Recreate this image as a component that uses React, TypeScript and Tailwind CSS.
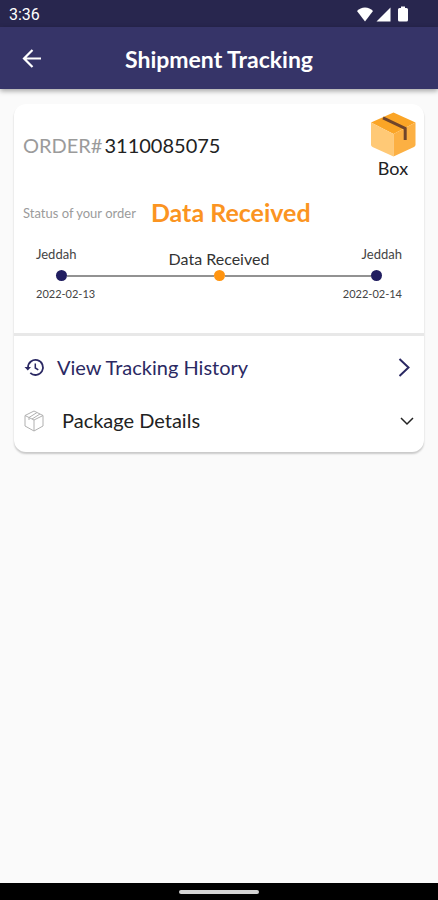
import React from "react";

const ROW = "flex h-[53px] w-full items-center text-left text-xl";

function StatusBar() {
  return (
    <div className="flex h-[27px] items-center justify-between bg-[#28264e] pr-[29px] pl-[9px] text-white">
      <span className="pt-0.5 font-[Roboto,sans-serif] text-base">3:36</span>
      <div className="flex items-center gap-0.5">
        <svg className="h-4 w-[18px]" viewBox="0 0 18 16" fill="currentColor" aria-hidden="true">
          <path d="M9 15.500 1 5C3.200 2.800 5.800 1.500 9 1.500S14.800 2.800 17 5z" />
        </svg>
        <svg className="h-4 w-[15px]" viewBox="0 0 15 16" fill="currentColor" aria-hidden="true">
          <path d="M14.500 1.500v14H0.500z" />
        </svg>
        <svg className="ml-1 h-4 w-3" viewBox="0 0 12 16" fill="currentColor" aria-hidden="true">
          <path d="M4 0.500h4V2h1.500a1.500 1.500 0 0 1 1.500 1.500v10.500a1.500 1.500 0 0 1-1.500 1.500h-7A1.500 1.500 0 0 1 1 14V3.500A1.500 1.500 0 0 1 2.500 2H4z" />
        </svg>
      </div>
    </div>
  );
}

function AppBar() {
  return (
    <header className="grid h-[62px] grid-cols-[64px_1fr_64px] items-center bg-[#363468] text-white shadow-[0_2px_5px_rgba(0,0,0,0.35)]">
      <button type="button" aria-label="Back" className="flex h-14 w-16 items-center justify-center">
        <svg className="size-5" viewBox="0 0 20 20" fill="none" stroke="currentColor" strokeWidth="2.200" aria-hidden="true">
          <path d="M19 10.500H2M10.500 2 2 10.500l8.500 8.500" />
        </svg>
      </button>
      <h1 className="pt-0.5 text-center text-[23px] leading-7 font-bold whitespace-nowrap">Shipment Tracking</h1>
    </header>
  );
}

function BoxPicture() {
  return (
    <svg className="h-[45px] w-[46px]" viewBox="0 0 46 45" aria-hidden="true">
      <path d="M23.500 0.500 45.500 10.500 23.500 22 1 10.500z" fill="#fba526" />
      <path d="M1 10.500 23.500 22v22.500L2.500 35Q1 34.300 1 32.800z" fill="#ffc976" />
      <path d="M45.500 10.500 23.500 22v22.500L44 35q1.500-.7 1.500-2.200z" fill="#fcb043" />
      <path d="M13 5.800 35.200 16.500V28" fill="none" stroke="#70452b" strokeWidth="3" />
    </svg>
  );
}

function Timeline() {
  return (
    <div className="mt-[17px] px-[22px] text-[#444]">
      <div className="flex h-[23px] justify-between">
        <span className="w-20 text-[13px] leading-4">Jeddah</span>
        <span className="self-end text-base leading-5 text-[#333]">Data Received</span>
        <span className="w-20 text-right text-[13px] leading-4">Jeddah</span>
      </div>
      <div className="mt-px flex items-center px-5">
        <span className="size-[11px] rounded-full bg-[#211e60]" />
        <span className="h-0.5 flex-1 bg-[#929292]" />
        <span className="size-[11px] rounded-full bg-[#ff9410]" />
        <span className="h-0.5 flex-1 bg-[#929292]" />
        <span className="size-[11px] rounded-full bg-[#211e60]" />
      </div>
      <div className="mt-[5px] flex justify-between text-[11px] leading-4">
        <time dateTime="2022-02-13">2022-02-13</time>
        <time dateTime="2022-02-14">2022-02-14</time>
      </div>
    </div>
  );
}

export default function App() {
  return (
    <div className="flex min-h-screen flex-col bg-[#fafafa] font-[Lato,sans-serif]">
      <StatusBar />
      <AppBar />
      <main className="flex-1 px-3.5 pt-[15px]">
        <section className="overflow-hidden rounded-xl bg-white shadow-[0_2px_2px_rgba(0,0,0,0.2)]">
          <div className="border-b-[3px] border-[#e8e8e8] pb-[31px]">
            <div className="flex items-center justify-between pt-2 pr-2 pl-[9px]">
              <p className="flex gap-0.5 pb-0.5 text-xl text-[#222]">
                <span className="text-[#9b9b9b]">ORDER#</span>
                <span>3110085075</span>
              </p>
              <div className="flex flex-col items-center text-lg leading-[22px] text-[#222]">
                <BoxPicture />
                <span>Box</span>
              </div>
            </div>
            <p className="mt-[18px] flex h-8 items-center gap-[15px] pl-[9px]">
              <span className="pt-0.5 text-[13px] text-[#9b9b9b]">Status of your order</span>
              <span className="text-[25px] font-bold text-[#fb9421]">Data Received</span>
            </p>
            <Timeline />
          </div>
          <div className="px-2.5 py-[5px]">
            <button type="button" className={`${ROW} text-[#2b2963]`}>
              <svg className="h-5 w-[21px]" viewBox="0 0 21 20" fill="none" stroke="currentColor" strokeWidth="1.800" aria-hidden="true">
                <path d="M4 9.500a7.500 7.500 0 1 1 2.300 5.400" />
                <path d="M0.500 9h6.500l-3.200 3.500z" fill="currentColor" stroke="none" />
                <path d="M11.300 5.500V10l3 1.900" strokeWidth="1.500" />
              </svg>
              <span className="ml-3 flex-1 pb-0.5">View Tracking History</span>
              <svg className="mr-1 h-5 w-3" viewBox="0 0 12 20" fill="none" stroke="currentColor" strokeWidth="2" aria-hidden="true">
                <path d="M1.500 1 10.500 9.500l-9 8.500" />
              </svg>
            </button>
            <button type="button" aria-expanded="false" className={`${ROW} text-[#222]`}>
              <svg className="h-[22px] w-5" viewBox="0 0 20 22" fill="none" stroke="#b0b0b0" strokeWidth="1" strokeLinejoin="round" aria-hidden="true">
                <path d="M10 1 19 5.500v10.500L10 21 1 16v-10.500zM1 5.500 10 10l9-4.500M10 10v11M5 7.500l8-5M8 9l8-5M5 7.500v2.500" />
              </svg>
              <span className="ml-[18px] flex-1 pb-0.5">Package Details</span>
              <svg className="h-2.5 w-3.5" viewBox="0 0 14 10" fill="none" stroke="currentColor" strokeWidth="1.500" aria-hidden="true">
                <path d="M1 2l6 6 6-6" />
              </svg>
            </button>
          </div>
        </section>
      </main>
      <footer className="flex h-[17px] items-center justify-center bg-black">
        <span className="h-1 w-20 rounded-full bg-[#d4d4d4]" />
      </footer>
    </div>
  );
}
